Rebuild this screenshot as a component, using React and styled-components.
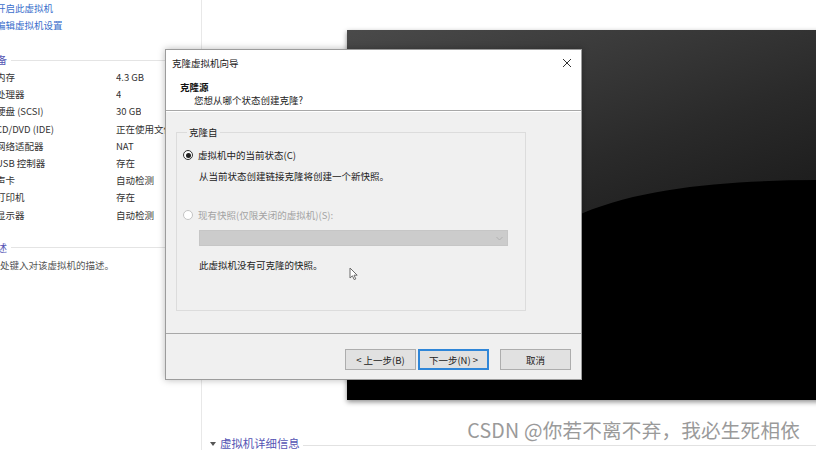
import React from "react";
import styled, { createGlobalStyle } from "styled-components";

const GlobalStyle = createGlobalStyle`
  html, body {
    margin: 0;
    padding: 0;
    background: #ffffff;
  }
  body {
    font-family: "Noto Sans CJK SC", "Liberation Sans", sans-serif;
    font-size: 9.5px;
    color: #333333;
  }
`;

const Page = styled.div`
  position: relative;
  display: flex;
  width: 816px;
  height: 450px;
  overflow: hidden;
  background: #ffffff;
`;

// panel izquierdo con info del equipo (cortado por la izquierda)
const LeftPanel = styled.div`
  width: 201px;
  flex-shrink: 0;
  border-right: 1px solid #e8e8e8;
  overflow: hidden;
`;

const LeftInner = styled.div`
  margin-left: -30px;
  width: 226px;
`;

const ActionLink = styled.div`
  padding-left: 26px;
  height: 17px;
  line-height: 17px;
  color: #3b6fcc;
  white-space: nowrap;
`;

const SectionHeader = styled.div`
  display: flex;
  align-items: center;
  padding-left: 17px;
  margin-top: ${(p) => p.$top || 0}px;
  height: 18px;
  line-height: 18px;
  color: #5454b4;
  font-size: 10px;
  white-space: nowrap;
  &::after {
    content: "";
    flex: 1;
    height: 1px;
    background: #e4e4e4;
    margin-left: 4px;
  }
`;

const DeviceRow = styled.div`
  display: flex;
  padding-left: 26px;
  height: 17.2px;
  line-height: 17.2px;
  white-space: nowrap;
`;

const DeviceLabel = styled.span`
  width: 120px;
  flex-shrink: 0;
  color: #333333;
`;

const DeviceValue = styled.span`
  color: #333333;
  overflow: hidden;
`;

const DescText = styled.div`
  padding-left: 11px;
  height: 17px;
  line-height: 17px;
  color: #555555;
  white-space: nowrap;
`;

const RightArea = styled.div`
  flex: 1;
  display: flex;
  flex-direction: column;
  padding: 30px 0 0 145px;
  overflow: hidden;
`;

const Screen = styled.div`
  width: 480px;
  height: 370px;
  flex-shrink: 0;
  background: #000000;
  box-shadow: 0 2px 5px rgba(0, 0, 0, 0.45);
  svg {
    display: block;
  }
`;

const DetailsHeader = styled.div`
  display: flex;
  align-items: center;
  margin: 36px 0 0 -137px;
  height: 14px;
  line-height: 14px;
  font-size: 11.4px;
  color: #5454b4;
  white-space: nowrap;
  &::after {
    content: "";
    flex: 1;
    height: 1px;
    background: #e2e2e2;
    margin: 4px 0 0 3px;
  }
`;

const Caret = styled.span`
  display: inline-block;
  width: 0;
  height: 0;
  border-left: 3px solid transparent;
  border-right: 3px solid transparent;
  border-top: 4px solid #555555;
  margin: 1px 4px 0 0;
`;

// ventana del asistente
const Dialog = styled.div`
  position: absolute;
  left: 165px;
  top: 49px;
  width: 417px;
  height: 331px;
  box-sizing: border-box;
  display: flex;
  flex-direction: column;
  background: #ffffff;
  border: 1px solid #9c9c9c;
  box-shadow: 0 0 7px rgba(0, 0, 0, 0.28);
`;

const TitleBar = styled.div`
  display: flex;
  align-items: center;
  justify-content: space-between;
  height: 25px;
  padding: 0 9px 0 6px;
  color: #222222;
`;

const WizardHead = styled.div`
  height: 36px;
  padding: 6px 0 0 14px;
  box-sizing: border-box;
  border-bottom: 1px solid #a8a8a8;
`;

const HeadTitle = styled.div`
  font-weight: 700;
  line-height: 13px;
  color: #111111;
`;

const HeadSub = styled.div`
  padding-left: 14px;
  line-height: 13px;
  color: #222222;
`;

const Body = styled.div`
  flex: 1;
  background: #f0f0f0;
  padding: 14px 55px 0 10px;
  border-bottom: 1px solid #a8a8a8;
  box-shadow: inset 0 1px 0 #ffffff;
`;

const GroupBox = styled.fieldset`
  margin: 0;
  padding: 9px 0 0 6px;
  height: 186px;
  box-sizing: border-box;
  border: 1px solid #dcdcdc;
  min-width: 0;
`;

const GroupLegend = styled.legend`
  margin-left: 4px;
  padding: 0 2px;
  line-height: 14px;
  color: #222222;
`;

const RadioRow = styled.div`
  display: flex;
  align-items: center;
  height: 14px;
  margin-top: ${(p) => p.$top || 0}px;
  color: ${(p) => (p.$disabled ? "#a3a3a3" : "#222222")};
`;

const RadioCircle = styled.span`
  width: 10px;
  height: 10px;
  box-sizing: border-box;
  border-radius: 50%;
  border: 1px solid ${(p) => (p.$disabled ? "#c4c4c4" : "#333333")};
  background: #ffffff;
  display: flex;
  align-items: center;
  justify-content: center;
  margin-right: 5px;
  &::after {
    content: "";
    width: 5px;
    height: 5px;
    border-radius: 50%;
    background: ${(p) => (p.$checked ? "#222222" : "transparent")};
  }
`;

const Hint = styled.div`
  padding-left: 16px;
  margin-top: ${(p) => p.$top || 0}px;
  line-height: 14px;
  color: #222222;
`;

const ComboBox = styled.div`
  margin: 8px 0 0 16px;
  width: 309px;
  height: 16px;
  box-sizing: border-box;
  background: #cccccc;
  border: 1px solid #c6c6c6;
  display: flex;
  align-items: center;
  justify-content: flex-end;
  padding-right: 4px;
`;

const Footer = styled.div`
  height: 45px;
  display: flex;
  justify-content: flex-end;
  align-items: flex-start;
  padding: 15px 10px 0 0;
  box-sizing: border-box;
  background: #f0f0f0;
`;

const WinButton = styled.div`
  width: 71px;
  height: 21px;
  box-sizing: border-box;
  display: flex;
  align-items: center;
  justify-content: center;
  background: #e1e1e1;
  border: ${(p) => (p.$primary ? "2px solid #2f86d8" : "1px solid #adadad")};
  margin-left: ${(p) => p.$gap || 0}px;
  color: #222222;
`;

const Cursor = styled.svg`
  position: absolute;
  left: 349px;
  top: 267px;
`;

const Watermark = styled.div`
  position: absolute;
  right: 16px;
  top: 417px;
  font-size: 19.6px;
  line-height: 26px;
  color: #9a9a9a;
  white-space: nowrap;
  letter-spacing: 0.2px;
`;

const devices = [
  ["内存", "4.3 GB"],
  ["处理器", "4"],
  ["硬盘 (SCSI)", "30 GB"],
  ["CD/DVD (IDE)", "正在使用文件"],
  ["网络适配器", "NAT"],
  ["USB 控制器", "存在"],
  ["声卡", "自动检测"],
  ["打印机", "存在"],
  ["显示器", "自动检测"],
];

const ScreenArt = () => (
  <svg width="480" height="370" viewBox="0 0 480 370">
    <defs>
      <linearGradient id="gloss" x1="0" y1="0" x2="0.55" y2="1">
        <stop offset="0" stopColor="#4a4a4a" />
        <stop offset="0.55" stopColor="#2a2a2a" />
        <stop offset="1" stopColor="#141414" />
      </linearGradient>
    </defs>
    <rect width="480" height="370" fill="#000000" />
    <path
      d="M0 0 H480 V150 C 390 150, 300 156, 236 183 C 160 214, 70 262, 0 300 Z"
      fill="url(#gloss)"
    />
  </svg>
);

const App = () => {
  return (
    <>
      <GlobalStyle />
      <Page>
        <LeftPanel>
          <LeftInner>
            <ActionLink>开启此虚拟机</ActionLink>
            <ActionLink>编辑虚拟机设置</ActionLink>
            <SectionHeader $top={17}>设备</SectionHeader>
            {devices.map(([label, value]) => (
              <DeviceRow key={label}>
                <DeviceLabel>{label}</DeviceLabel>
                <DeviceValue>{value}</DeviceValue>
              </DeviceRow>
            ))}
            <SectionHeader $top={15}>描述</SectionHeader>
            <DescText>在此处键入对该虚拟机的描述。</DescText>
          </LeftInner>
        </LeftPanel>

        <RightArea>
          <Screen>
            <ScreenArt />
          </Screen>
          <DetailsHeader>
            <Caret />
            虚拟机详细信息
          </DetailsHeader>
        </RightArea>

        <Dialog>
          <TitleBar>
            <span>克隆虚拟机向导</span>
            <svg width="10" height="10" viewBox="0 0 10 10">
              <path d="M1 1 L9 9 M9 1 L1 9" stroke="#333" strokeWidth="1" />
            </svg>
          </TitleBar>
          <WizardHead>
            <HeadTitle>克隆源</HeadTitle>
            <HeadSub>您想从哪个状态创建克隆?</HeadSub>
          </WizardHead>
          <Body>
            <GroupBox>
              <GroupLegend>克隆自</GroupLegend>
              <RadioRow>
                <RadioCircle $checked />
                虚拟机中的当前状态(C)
              </RadioRow>
              <Hint $top={7}>从当前状态创建链接克隆将创建一个新快照。</Hint>
              <RadioRow $top={25} $disabled>
                <RadioCircle $disabled />
                现有快照(仅限关闭的虚拟机)(S):
              </RadioRow>
              <ComboBox>
                <svg width="7" height="5" viewBox="0 0 7 5">
                  <path d="M0.5 1 L3.5 4 L6.5 1" stroke="#b0b0b0" fill="none" />
                </svg>
              </ComboBox>
              <Hint $top={12}>此虚拟机没有可克隆的快照。</Hint>
            </GroupBox>
          </Body>
          <Footer>
            <WinButton>&lt; 上一步(B)</WinButton>
            <WinButton $primary $gap={2}>下一步(N) &gt;</WinButton>
            <WinButton $gap={11}>取消</WinButton>
          </Footer>
        </Dialog>

        <Cursor width="10" height="14" viewBox="0 0 10 14">
          <path
            d="M1 1 L1 11 L3.4 8.8 L5.2 12.6 L6.8 11.9 L5 8.2 L8.2 8.2 Z"
            fill="#ffffff"
            stroke="#6a6a6a"
            strokeWidth="1"
            strokeLinejoin="round"
          />
        </Cursor>

        <Watermark>CSDN @你若不离不弃，我必生死相依</Watermark>
      </Page>
    </>
  );
};

export default App;
